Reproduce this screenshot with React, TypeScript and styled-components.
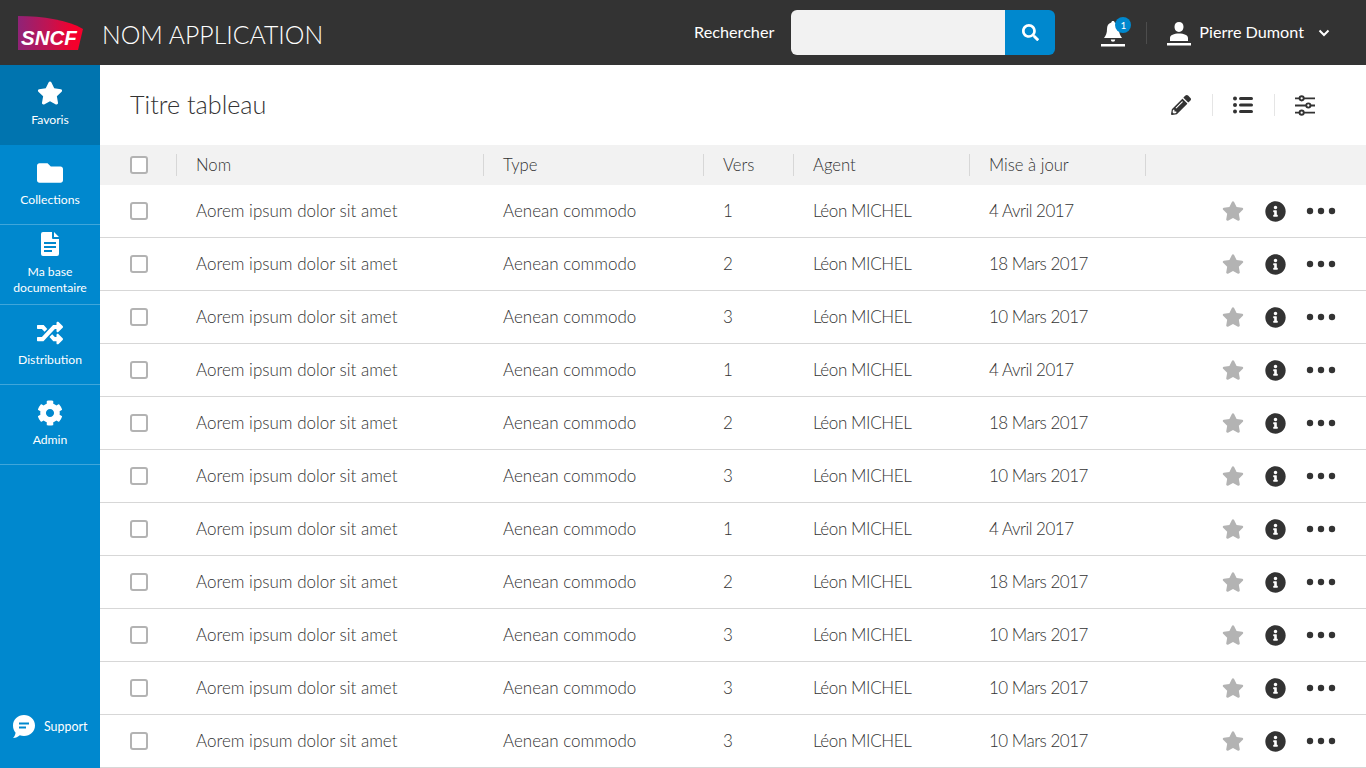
import React from "react";
import styled, { createGlobalStyle } from "styled-components";
import { FaStar, FaFolder, FaRandom, FaCog, FaInfoCircle, FaSearch, FaPencilAlt } from "react-icons/fa";

const GlobalStyle = createGlobalStyle`
  html, body {
    margin: 0;
    padding: 0;
    height: 100%;
    overflow: hidden;
    background: #fff;
    font-family: Lato, "Open Sans", sans-serif;
    color: #333;
  }
  * { box-sizing: border-box; }
`;

const Page = styled.div`
  width: 1366px;
  height: 768px;
  display: flex;
  flex-direction: column;
  overflow: hidden;
`;

const Header = styled.header`
  height: 65px;
  flex: none;
  background: #333;
  color: #fff;
  display: flex;
  align-items: center;
`;

const Logo = styled.svg`
  width: 66px;
  height: 34px;
  margin-left: 18px;
  flex: none;
`;

const AppName = styled.div`
  margin-left: 18px;
  font-size: 24.8px;
  font-weight: 300;
  white-space: nowrap;
  position: relative;
  top: 2px;
`;

const SearchLabel = styled.div`
  margin-left: auto;
  font-size: 16.2px;
  position: relative;
  top: -1px;
`;

const SearchBox = styled.div`
  margin-left: 17px;
  width: 264px;
  height: 45px;
  display: flex;
  border-radius: 6px;
  overflow: hidden;
  position: relative;
  top: -0.5px;
`;

const SearchInput = styled.div`
  flex: 1;
  background: #f2f2f2;
`;

const SearchButton = styled.div`
  width: 50px;
  background: #0088ce;
  display: flex;
  align-items: center;
  justify-content: center;
  font-size: 17px;
`;

const BellWrap = styled.div`
  margin-left: 46px;
  width: 24px;
  height: 28px;
  position: relative;
`;

const Badge = styled.span`
  position: absolute;
  top: -2px;
  left: 14px;
  width: 16px;
  height: 16px;
  border-radius: 50%;
  background: #0088ce;
  font-size: 10px;
  line-height: 16px;
  text-align: center;
`;

const HeaderDivider = styled.div`
  width: 1px;
  height: 22px;
  background: #4d4d4d;
  margin-left: 21px;
`;

const UserIcon = styled.svg`
  width: 24px;
  height: 28px;
  margin-left: 20px;
`;

const UserName = styled.div`
  margin-left: 8px;
  font-size: 16.2px;
  position: relative;
  top: -1px;
`;

const Chevron = styled.svg`
  width: 12px;
  height: 8px;
  margin-left: 14px;
  margin-right: 36px;
`;

const Body = styled.div`
  flex: 1;
  display: flex;
  min-height: 0;
`;

const Sidebar = styled.nav`
  width: 100px;
  flex: none;
  background: #0088ce;
  color: #fff;
  display: flex;
  flex-direction: column;
`;

const NavItem = styled.div<{ $active?: boolean; $compact?: boolean }>`
  height: 80px;
  flex: none;
  display: flex;
  flex-direction: column;
  align-items: center;
  padding-top: ${({ $compact }) => ($compact ? "6px" : "15px")};
  background: ${({ $active }) => ($active ? "#0074af" : "transparent")};
  border-bottom: 1px solid ${({ $active }) => ($active ? "#0074af" : "rgba(255,255,255,0.25)")};
`;

const NavIcon = styled.div`
  height: 26px;
  font-size: 26px;
  line-height: 0;
  display: flex;
  align-items: center;
  justify-content: center;
`;

const NavLabel = styled.div<{ $compact?: boolean }>`
  margin-top: ${({ $compact }) => ($compact ? "7px" : "6px")};
  font-size: 12.2px;
  line-height: 16px;
  text-align: center;
`;

const Support = styled.div`
  margin-top: auto;
  height: 84px;
  display: flex;
  align-items: center;
  padding-left: 13px;
  font-size: 12.4px;
  gap: 9px;
`;

const Main = styled.main`
  flex: 1;
  min-width: 0;
`;

const TitleBar = styled.div`
  height: 80px;
  display: flex;
  align-items: center;
  padding-left: 30px;
`;

const Title = styled.h1`
  margin: 0;
  font-size: 25.2px;
  font-weight: 300;
  color: #333;
  position: relative;
  top: -1px;
`;

const Tools = styled.div`
  margin-left: auto;
  display: flex;
  align-items: center;
  margin-right: 51px;
`;

const Tool = styled.div`
  width: 62px;
  height: 22px;
  display: flex;
  align-items: center;
  justify-content: flex-end;
  padding-right: 21px;
  border-right: 1px solid #e5e5e5;
  color: #333;
  font-size: 20px;

  &:last-child {
    border-right: 0;
    padding-right: 0;
    width: 40px;
  }
`;

const columns = "77px 307px 220px 90px 176px 176px 1fr";

const HeadRow = styled.div`
  height: 40px;
  background: #f2f2f2;
  display: grid;
  grid-template-columns: ${columns};
  align-items: center;
  font-size: 16.7px;
  font-weight: 300;
  color: #333;
`;

const HeadCell = styled.div`
  height: 22px;
  line-height: 22px;
  margin-left: -1px;
  padding-left: 19px;
  border-left: 1px solid #d7d7d7;
`;

const Row = styled.div`
  height: 53px;
  display: grid;
  grid-template-columns: ${columns};
  align-items: center;
  font-size: 17px;
  font-weight: 300;
  color: #333;
  border-bottom: 1px solid #d7d7d7;
`;

const Cell = styled.div<{ $tight?: number }>`
  padding-left: 19px;
  padding-bottom: 2px;
  white-space: nowrap;
  letter-spacing: ${({ $tight }) => $tight ?? 0}px;
`;

const CheckCell = styled.div`
  padding-left: 30px;
  display: flex;
`;

const Check = styled.span`
  width: 18px;
  height: 18px;
  border: 2px solid #b3b3b3;
  border-radius: 3px;
  background: #fff;
`;

const Actions = styled.div`
  display: flex;
  align-items: center;
  justify-content: flex-end;
  padding-right: 30px;
`;

const StarAction = styled.span`
  color: #b3b3b3;
  font-size: 22px;
  line-height: 0;
`;

const InfoAction = styled.span`
  color: #333;
  font-size: 21px;
  line-height: 0;
  margin-left: 21px;
`;

const Dots = styled.svg`
  width: 30px;
  height: 8px;
  margin-left: 20px;
`;

const rows = [
  ["1", "4 Avril 2017"],
  ["2", "18 Mars 2017"],
  ["3", "10 Mars 2017"],
  ["1", "4 Avril 2017"],
  ["2", "18 Mars 2017"],
  ["3", "10 Mars 2017"],
  ["1", "4 Avril 2017"],
  ["2", "18 Mars 2017"],
  ["3", "10 Mars 2017"],
  ["3", "10 Mars 2017"],
  ["3", "10 Mars 2017"],
];

const DocIcon = () => (
  <svg width="18" height="24" viewBox="0 0 18 24">
    <path fill="#fff" fillRule="evenodd" d="M2 0h9v6a1 1 0 0 0 1 1h6v15a2 2 0 0 1-2 2H2a2 2 0 0 1-2-2V2a2 2 0 0 1 2-2zM13 0l5 5h-5zM3 10v2h12v-2zM3 14v2h12v-2zM3 18v2h8v-2z" />
  </svg>
);

const SupportIcon = () => (
  <svg width="22" height="23" viewBox="0 0 22 23">
    <path fill="#fff" fillRule="evenodd" d="M11 0c6 0 11 4.500 11 10.500S17 21 11 21c-1.500 0-3-.3-4.200-.8C5 21.800 3 22.800 0 23c1.300-1.300 2.300-3 2.600-5.200C1 16 0 13.500 0 10.500 0 4.500 5 0 11 0zM6 7.500v2h10v-2zM6 11.500v2h7v-2z" />
  </svg>
);

const BellIcon = () => (
  <svg width="24" height="28" viewBox="0 0 24 28">
    <path fill="#fff" d="M12 2c1 0 1.700.7 1.700 1.600 3 .8 4.300 3.300 4.300 6.400 0 4 1 6.500 3 9H3c2-2.500 3-5 3-9 0-3.100 1.300-5.600 4.300-6.400C10.300 2.700 11 2 12 2zM9.800 20.500h4.400a2.200 2.200 0 0 1-4.400 0z" />
    <rect x="0" y="25" width="24" height="2.500" fill="#fff" />
  </svg>
);

const SlidersIcon = () => (
  <svg width="20" height="21" viewBox="0 0 21 21" fill="none" stroke="#333" strokeWidth="2">
    <path d="M0 3h4.500M9.500 3H21M0 10.500h11.500M16.500 10.500H21M0 18h4.500M9.500 18H21" />
    <circle cx="7" cy="3" r="2.200" />
    <circle cx="14" cy="10.500" r="2.200" />
    <circle cx="7" cy="18" r="2.200" />
  </svg>
);

const ListIcon = () => (
  <svg width="20" height="18" viewBox="0 0 20 18" fill="#333">
    <circle cx="2" cy="2.500" r="2" />
    <circle cx="2" cy="9" r="2" />
    <circle cx="2" cy="15.500" r="2" />
    <rect x="6" y="1" width="14" height="3" rx="1.500" />
    <rect x="6" y="7.500" width="14" height="3" rx="1.500" />
    <rect x="6" y="14" width="14" height="3" rx="1.500" />
  </svg>
);

export default function App() {
  return (
    <Page>
      <GlobalStyle />
      <Header>
        <Logo viewBox="0 0 66 34">
          <defs>
            <linearGradient id="sncf" x1="0" x2="1" y1="0" y2="0">
              <stop offset="0" stopColor="#8f2377" />
              <stop offset="0.5" stopColor="#c4124f" />
              <stop offset="0.85" stopColor="#f5002c" />
            </linearGradient>
          </defs>
          <path fill="url(#sncf)" d="M0 0c25 0 50 4 65 13l-5 21H0z" />
          <text x="3" y="29" fontFamily="Liberation Sans" fontWeight="700" fontStyle="italic" fontSize="20.500" fill="#fff">SNCF</text>
        </Logo>
        <AppName>NOM APPLICATION</AppName>
        <SearchLabel>Rechercher</SearchLabel>
        <SearchBox>
          <SearchInput />
          <SearchButton><FaSearch /></SearchButton>
        </SearchBox>
        <BellWrap>
          <BellIcon />
          <Badge>1</Badge>
        </BellWrap>
        <HeaderDivider />
        <UserIcon viewBox="0 0 24 28">
          <path fill="#fff" d="M12 3c2.800 0 4.500 2 4.500 4.800S14.800 13 12 13 7.500 10.600 7.500 7.800 9.200 3 12 3zM12 14.500c5 0 9 1.500 9 4.500v3H3v-3c0-3 4-4.500 9-4.500z" />
          <rect x="0" y="24" width="24" height="2.500" fill="#fff" />
        </UserIcon>
        <UserName>Pierre Dumont</UserName>
        <Chevron viewBox="0 0 12 8" fill="none" stroke="#fff" strokeWidth="2">
          <path d="M1.500 1.500L6 6l4.500-4.500" />
        </Chevron>
      </Header>
      <Body>
        <Sidebar>
          <NavItem $active>
            <NavIcon><FaStar /></NavIcon>
            <NavLabel>Favoris</NavLabel>
          </NavItem>
          <NavItem>
            <NavIcon><FaFolder /></NavIcon>
            <NavLabel>Collections</NavLabel>
          </NavItem>
          <NavItem $compact>
            <NavIcon><DocIcon /></NavIcon>
            <NavLabel $compact>Ma base<br />documentaire</NavLabel>
          </NavItem>
          <NavItem>
            <NavIcon><FaRandom /></NavIcon>
            <NavLabel>Distribution</NavLabel>
          </NavItem>
          <NavItem>
            <NavIcon><FaCog /></NavIcon>
            <NavLabel>Admin</NavLabel>
          </NavItem>
          <Support>
            <SupportIcon />
            <span>Support</span>
          </Support>
        </Sidebar>
        <Main>
          <TitleBar>
            <Title>Titre tableau</Title>
            <Tools>
              <Tool><FaPencilAlt /></Tool>
              <Tool><ListIcon /></Tool>
              <Tool><SlidersIcon /></Tool>
            </Tools>
          </TitleBar>
          <HeadRow>
            <CheckCell><Check /></CheckCell>
            <HeadCell>Nom</HeadCell>
            <HeadCell>Type</HeadCell>
            <HeadCell>Vers</HeadCell>
            <HeadCell>Agent</HeadCell>
            <HeadCell>Mise à jour</HeadCell>
            <HeadCell />
          </HeadRow>
          {rows.map(([version, date], i) => (
            <Row key={i}>
              <CheckCell><Check /></CheckCell>
              <Cell>Aorem ipsum dolor sit amet</Cell>
              <Cell>Aenean commodo</Cell>
              <Cell>{version}</Cell>
              <Cell $tight={-0.4}>Léon MICHEL</Cell>
              <Cell $tight={-0.5}>{date}</Cell>
              <Actions>
                <StarAction><FaStar /></StarAction>
                <InfoAction><FaInfoCircle /></InfoAction>
                <Dots viewBox="0 0 30 8" fill="#333">
                  <circle cx="4" cy="4" r="3.200" />
                  <circle cx="15" cy="4" r="3.200" />
                  <circle cx="26" cy="4" r="3.200" />
                </Dots>
              </Actions>
            </Row>
          ))}
        </Main>
      </Body>
    </Page>
  );
}
